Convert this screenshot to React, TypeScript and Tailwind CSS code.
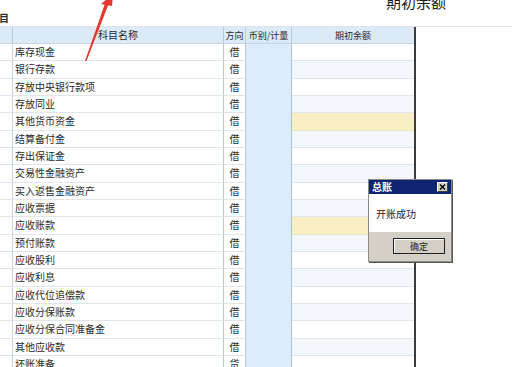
const rows: { name: string; dir: string; hl?: boolean }[] = [
  { name: "库存现金", dir: "借" },
  { name: "银行存款", dir: "借" },
  { name: "存放中央银行款项", dir: "借" },
  { name: "存放同业", dir: "借" },
  { name: "其他货币资金", dir: "借", hl: true },
  { name: "结算备付金", dir: "借" },
  { name: "存出保证金", dir: "借" },
  { name: "交易性金融资产", dir: "借" },
  { name: "买入返售金融资产", dir: "借" },
  { name: "应收票据", dir: "借" },
  { name: "应收账款", dir: "借", hl: true },
  { name: "预付账款", dir: "借" },
  { name: "应收股利", dir: "借" },
  { name: "应收利息", dir: "借" },
  { name: "应收代位追偿款", dir: "借" },
  { name: "应收分保账款", dir: "借" },
  { name: "应收分保合同准备金", dir: "借" },
  { name: "其他应收款", dir: "借" },
  { name: "坏账准备", dir: "贷" },
];

const font = { fontFamily: '"Noto Sans CJK SC", "Noto Sans", sans-serif' };

function Dialog() {
  return (
    <div className="absolute left-[368px] top-[179px] w-[84px] h-[83px] flex flex-col border border-[#8a8a8a] bg-[#d4d0c8] shadow-[1px_1px_0_#555]">
      <div className="h-[14px] bg-[#0f2470] flex items-center justify-between pl-[3px] pr-[3px]">
        <span className="text-[10px] font-bold text-white leading-none">总账</span>
        <span className="w-[11px] h-[10px] bg-[#d4d0c8] border border-[#fff] border-r-[#404040] border-b-[#404040] flex items-center justify-center">
          <svg width="7" height="6" viewBox="0 0 7 6">
            <path d="M1 0.5 L6 5.5 M6 0.5 L1 5.5" stroke="#000" strokeWidth="1.4" />
          </svg>
        </span>
      </div>
      <div className="h-[38px] bg-white flex items-center pl-[7px]">
        <span className="text-[10px] text-[#222]">开账成功</span>
      </div>
      <div className="flex-1 flex items-start justify-end pr-[6px] pt-[6px]">
        <div className="w-[52px] h-[16px] border border-[#202020] bg-[#d4d0c8] flex items-center justify-center shadow-[inset_1px_1px_0_#fff]">
          <span className="text-[9px] text-[#222] leading-none">确定</span>
        </div>
      </div>
    </div>
  );
}

function Arrow() {
  return (
    <svg className="absolute left-0 top-0" width="130" height="70" viewBox="0 0 130 70">
      <polygon points="85,61 86.5,61 109,3 105.5,2" fill="#e3372f" />
      <polygon points="101,4 113,-6 112,6" fill="#e3372f" />
    </svg>
  );
}

export default function App() {
  return (
    <div className="relative w-[512px] h-[367px] overflow-hidden bg-white text-[#2a2a2a]" style={font}>
      <div className="h-[26px] flex flex-col">
        <div className="h-[10px] flex justify-end pr-[66px] overflow-hidden">
          <span className="text-[15px] leading-none -mt-[6px] text-[#1a1a1a]">期初余额</span>
        </div>
        <div className="h-[16px] flex items-center">
          <span className="text-[10px] font-bold -ml-[11px] leading-none">科目</span>
        </div>
      </div>
      <div className="flex border-t border-[#e0e4ea]">
        <div className="w-[416px] border-r-2 border-[#3c3c3c]">
          <div className="grid grid-cols-[13px_211px_22px_46px_122px] h-[17px] bg-[#dce9f7] border-b border-[#c6d6e8] text-[10px] leading-none">
            <div className="border-r border-[#b9c9db]" />
            <div className="border-r border-[#b9c9db] flex items-center justify-center">科目名称</div>
            <div className="border-r border-[#b9c9db] flex items-center justify-center text-[9px]">方向</div>
            <div className="border-r border-[#b9c9db] flex items-center justify-center text-[9px] whitespace-nowrap">币别/计量</div>
            <div className="flex items-center justify-center text-[9px]">期初余额</div>
          </div>
          {rows.map((r, i) => (
            <div
              key={r.name}
              className="grid grid-cols-[13px_211px_22px_46px_122px] h-[17.33px] text-[10px] leading-none"
            >
              <div className="border-r border-b border-[#c9d3de] border-b-[#e2e5ea]" />
              <div className="border-r border-[#b7c6d8] border-b border-b-[#e2e5ea] flex items-center pl-[2px]">
                {r.name}
              </div>
              <div className="border-r border-[#b7c6d8] border-b border-b-[#e2e5ea] flex items-center justify-center">
                {r.dir}
              </div>
              <div className="bg-[#dcecfb] border-r border-[#a9c2dc]" />
              <div
                className={
                  r.hl
                    ? "bg-[#f8f0c4] border-b border-[#ece5bb]"
                    : i % 2 === 1
                      ? "bg-[#f3f7fc] border-b border-[#e2e6ec]"
                      : "bg-white border-b border-[#e2e6ec]"
                }
              />
            </div>
          ))}
        </div>
        <div className="flex-1" />
      </div>
      <Arrow />
      <Dialog />
    </div>
  );
}
